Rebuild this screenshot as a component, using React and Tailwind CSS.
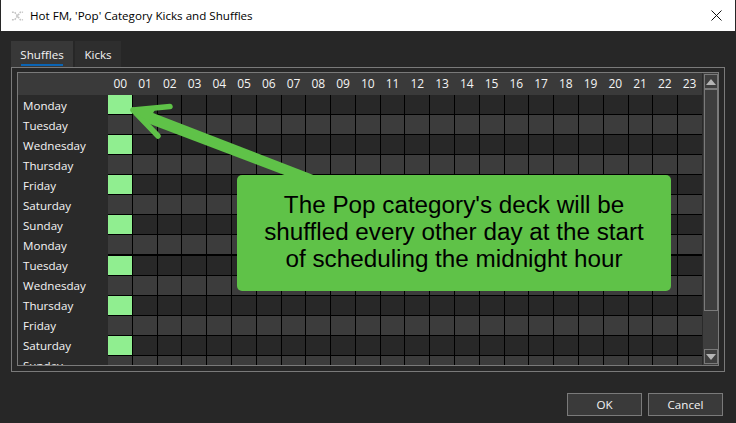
import React from 'react';

const days = ['Monday', 'Tuesday', 'Wednesday', 'Thursday', 'Friday', 'Saturday', 'Sunday', 'Monday', 'Tuesday', 'Wednesday', 'Thursday', 'Friday', 'Saturday', 'Sunday'];
const hours = Array.from({ length: 24 }, (_, i) => String(i).padStart(2, '0'));

const cellClass = (row, col) => {
    if (col === 0 && row % 2 === 0) return 'bg-[#90ee90]';
    return row % 2 === 0 ? 'bg-[#282828]' : 'bg-[#3c3c3c]';
};

const Arrow = () => (
    <svg className="absolute left-[125px] top-[100px] z-10" width="220" height="90" viewBox="125 100 220 90">
        <path d="M133 110 L148 111 L316 176 L287 176 L142 121 Z" fill="#5fc248" />
        <path d="M133 110 L170 106.5 M133 110 L158 136" stroke="#5fc248" strokeWidth="5.5" strokeLinecap="round" fill="none" />
        <path d="M133 110 L156 108 L148 122 Z" fill="#5fc248" />
    </svg>
);

const App = () => {
    return (
        <div className="relative w-[736px] h-[423px] overflow-hidden bg-[#272727] font-['Open_Sans','Noto_Sans',sans-serif] text-[11.6px] text-[#f4f4f4]">
            {/* Title bar */}
            <div className="h-[31px] mx-px bg-white text-black flex items-center">
                <svg className="ml-[10px]" width="13" height="14" viewBox="0 0 14 14" fill="none" stroke="#c4c4c4" strokeWidth="1.6" strokeDasharray="2 1">
                    <path d="M1 3h3l6 8h3M1 11h3l6-8h3" />
                </svg>
                <span className="ml-[6px]">Hot FM, 'Pop' Category Kicks and Shuffles</span>
                <svg className="ml-auto mr-[13px]" width="11" height="11" viewBox="0 0 11 11" stroke="#111" strokeWidth="1">
                    <path d="M0.5 0.5L10.5 10.5M10.5 0.5L0.5 10.5" />
                </svg>
            </div>

            {/* Tabs */}
            <div className="flex gap-[2px] ml-[11px] mt-[10px] h-[26px]">
                <div className="w-[62px] bg-[#383838] flex flex-col items-center pt-[5px]">
                    <span className="leading-[18px]">Shuffles</span>
                    <div className="w-[42px] h-[2px] bg-[#0a64b4]"></div>
                </div>
                <div className="w-[46px] bg-[#2e2e2e] flex justify-center pt-[5px]">
                    <span className="leading-[18px]">Kicks</span>
                </div>
            </div>

            {/* Tab page */}
            <div className="ml-[11px] w-[714px] h-[305px] border border-[#7a7a7a] pl-[5px] pt-[4px]">
                <div className="w-[702px] h-[294px] border border-[#7a7a7a] flex overflow-hidden">
                    <div className="w-[684px] flex flex-col overflow-hidden">
                        <div className="h-[22px] shrink-0 bg-[#3a3a3a] flex pl-[90px] text-[12px]">
                            {hours.map((h) => (
                                <div key={h} className="w-[24.75px] text-center leading-[22px]">{h}</div>
                            ))}
                        </div>
                        <div className="flex">
                            <div className="w-[90px] shrink-0 bg-[#2a2a2a]">
                                {days.map((d, i) => (
                                    <div key={i} className="h-[20px] pl-[5px] leading-[22px]">{d}</div>
                                ))}
                            </div>
                            <div className="w-[594px] grid grid-cols-[repeat(24,1fr)] gap-px bg-black">
                                {days.map((d, row) => hours.map((h, col) => (
                                    <div key={`${row}-${h}`} className={`h-[19px] ${cellClass(row, col)}`}></div>
                                )))}
                            </div>
                        </div>
                    </div>

                    {/* Scrollbar */}
                    <div className="w-[16px] bg-[#3e3e3e] flex flex-col items-center border-l border-[#2a2a2a]">
                        <div className="w-[14px] h-[15px] mt-px border border-[#7a7a7a] flex items-center justify-center">
                            <div className="w-0 h-0 border-l-[5px] border-r-[5px] border-b-[6px] border-l-transparent border-r-transparent border-b-[#b4b4b4]"></div>
                        </div>
                        <div className="w-[14px] h-[222px] border border-[#7a7a7a]"></div>
                        <div className="flex-1"></div>
                        <div className="w-[14px] h-[15px] mb-px border border-[#7a7a7a] flex items-center justify-center">
                            <div className="w-0 h-0 border-l-[5px] border-r-[5px] border-t-[6px] border-l-transparent border-r-transparent border-t-[#b4b4b4]"></div>
                        </div>
                    </div>
                </div>
            </div>

            {/* Buttons */}
            <div className="flex justify-end gap-[6px] mr-[13px] mt-[21px]">
                <button className="w-[75px] h-[23px] bg-[#3a3a3a] border border-[#7a7a7a] text-[#f4f4f4] leading-[20px]">OK</button>
                <button className="w-[75px] h-[23px] bg-[#3a3a3a] border border-[#7a7a7a] text-[#f4f4f4] leading-[20px]">Cancel</button>
            </div>

            {/* Annotation over the grid */}
            <div className="absolute z-20 left-[237px] top-[175px] w-[434px] h-[116px] pb-[3px] rounded-[5px] bg-[#5fc248] text-black font-['Liberation_Sans',sans-serif] text-[24.25px] leading-[27px] text-center flex items-center justify-center">
                <p>The Pop category's deck will be<br />shuffled every other day at the start<br />of scheduling the midnight hour</p>
            </div>
            <Arrow />
        </div>
    );
};

export default App;
